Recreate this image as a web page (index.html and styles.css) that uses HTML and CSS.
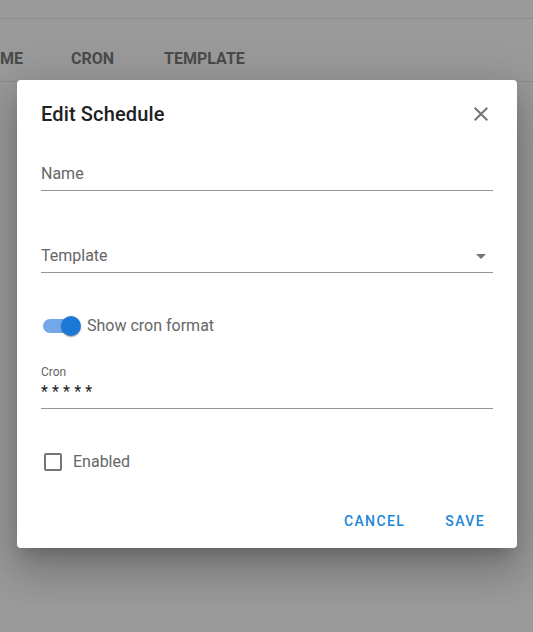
FILE: index.html
```html
<!DOCTYPE html>
<html lang="en">
<head>
<meta charset="utf-8">
<title>Edit Schedule</title>
<link rel="stylesheet" href="styles.css">
</head>
<body>
<div class="page">
  <div class="topbar"></div>
  <div class="table-head">
    <span class="th th-first">ME</span>
    <span class="th">CRON</span>
    <span class="th">TEMPLATE</span>
  </div>
</div>

<div class="dialog" role="dialog">
  <div class="dialog-title">
    <h2 class="title-text">Edit Schedule</h2>
    <svg class="icon close" viewBox="0 0 24 24" width="24" height="24"><path d="M19 6.41 17.59 5 12 10.59 6.41 5 5 6.41 10.59 12 5 17.59 6.41 19 12 13.41 17.59 19 19 17.59 13.41 12z"/></svg>
  </div>

  <div class="field field-name">
    <span class="field-label">Name</span>
  </div>

  <div class="field field-select">
    <span class="field-label">Template</span>
    <svg class="icon" viewBox="0 0 24 24" width="24" height="24"><path d="M7 10l5 5 5-5z"/></svg>
  </div>

  <div class="switch-row">
    <span class="switch">
      <span class="track"></span>
      <span class="thumb"></span>
    </span>
    <span class="row-label">Show cron format</span>
  </div>

  <div class="field field-cron">
    <span class="small-label">Cron</span>
    <span class="value">* * * * *</span>
  </div>

  <div class="check-row">
    <span class="checkbox"></span>
    <span class="row-label">Enabled</span>
  </div>

  <div class="actions">
    <button class="btn">Cancel</button>
    <button class="btn">Save</button>
  </div>
</div>
</body>
</html>
```

FILE: styles.css
```css
html, body {
  margin: 0;
  padding: 0;
}
body {
  background: #9a9a9a;
  font-family: Roboto, "Liberation Sans", sans-serif;
  width: 533px;
  height: 632px;
  overflow: hidden;
  position: relative;
}
.page {
  display: flex;
  flex-direction: column;
}
.topbar {
  height: 18px;
  border-bottom: 1px solid #8c8c8c;
}
.table-head {
  display: flex;
  gap: 50px;
  height: 63px;
  align-items: center;
  border-bottom: 1px solid #8c8c8c;
  padding-top: 16px;
  box-sizing: border-box;
}
.th {
  font-size: 16px;
  font-weight: 700;
  color: #4a4a4a;
}
.th-first {
  margin-right: -2px;
}

.dialog {
  position: absolute;
  left: 17px;
  top: 80px;
  width: 500px;
  height: 468px;
  background: #fff;
  border-radius: 4px;
  box-shadow: 0 11px 15px -7px rgba(0,0,0,0.2), 0 24px 38px 3px rgba(0,0,0,0.14), 0 9px 46px 8px rgba(0,0,0,0.12);
  padding: 0 24px;
  box-sizing: border-box;
  display: flex;
  flex-direction: column;
}
.dialog-title {
  display: flex;
  align-items: center;
  justify-content: space-between;
  padding-top: 22px;
  height: 24px;
}
.title-text {
  margin: 0;
  font-size: 20px;
  font-weight: 500;
  color: #212121;
  line-height: 24px;
  letter-spacing: 0.15px;
}
.icon {
  fill: #757575;
  flex: none;
}
.field {
  display: flex;
  align-items: center;
  justify-content: space-between;
  border-bottom: 1px solid #949494;
}
.field-name {
  margin-top: 36px;
  padding-bottom: 4px;
  height: 24px;
}
.field-select {
  margin-top: 53px;
  padding-bottom: 4px;
  height: 24px;
}
.field-label {
  font-size: 16px;
  line-height: 24px;
  color: #666;
}
.switch-row {
  margin-top: 34px;
  height: 38px;
  display: flex;
  align-items: center;
}
.switch {
  position: relative;
  width: 46px;
  height: 38px;
  flex: none;
}
.track {
  position: absolute;
  left: 2px;
  top: 12px;
  width: 34px;
  height: 14px;
  border-radius: 7px;
  background: #72a8e8;
}
.thumb {
  position: absolute;
  left: 20px;
  top: 9px;
  width: 20px;
  height: 20px;
  border-radius: 50%;
  background: #1c78d6;
  box-shadow: 0 2px 1px -1px rgba(0,0,0,0.2), 0 1px 1px 0 rgba(0,0,0,0.14), 0 1px 3px 0 rgba(0,0,0,0.12);
}
.row-label {
  font-size: 16px;
  line-height: 24px;
  color: #666;
}
.field-cron {
  margin-top: 19px;
  flex-direction: column;
  align-items: flex-start;
  padding-bottom: 6px;
}
.small-label {
  font-size: 12px;
  line-height: 16px;
  color: #666;
}
.value {
  font-size: 16px;
  line-height: 20px;
  padding-top: 2px;
  color: #222;
  letter-spacing: 0.1px;
}
.check-row {
  margin-top: 32px;
  height: 42px;
  display: flex;
  align-items: center;
  gap: 11px;
}
.checkbox {
  width: 14px;
  height: 14px;
  border: 2px solid #757575;
  border-radius: 2px;
  margin-left: 3px;
  margin-top: -1px;
}
.actions {
  margin-top: 20px;
  margin-right: -8px;
  height: 36px;
  display: flex;
  justify-content: flex-end;
  align-items: center;
  gap: 8px;
}
.btn {
  background: none;
  border: 0;
  padding: 0 16px;
  height: 36px;
  font-family: Roboto, "Liberation Sans", sans-serif;
  font-size: 14px;
  font-weight: 500;
  letter-spacing: 1.4px;
  text-transform: uppercase;
  color: #2185d8;
}
```
